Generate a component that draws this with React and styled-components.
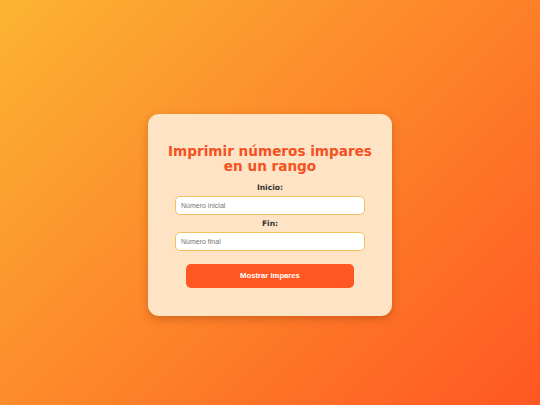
import React from "react";
import styled, { createGlobalStyle } from "styled-components";

const Global = createGlobalStyle`
  html, body { margin: 0; padding: 0; height: 100%; }
  body { font-family: "Liberation Sans", Arial, sans-serif; }
  #root { height: 100%; }
`;

const Page = styled.div`
  width: 540px;
  height: 405px;
  background: linear-gradient(135deg, #fbb432 0%, #ff5722 100%);
  display: flex;
  align-items: center;
  justify-content: center;
`;

const Card = styled.div`
  width: 244px;
  box-sizing: border-box;
  margin-top: 25px;
  padding: 30px 27px 28px;
  background: #ffe3c5;
  border-radius: 11px;
  box-shadow: 0 3px 9px rgba(120, 40, 0, 0.3);
  display: flex;
  flex-direction: column;
  align-items: center;
`;

const Title = styled.h2`
  margin: 0 0 9px;
  font-family: "DejaVu Sans", Verdana, sans-serif;
  font-weight: bold;
  font-size: 13.6px;
  line-height: 15px;
  color: #f4511e;
  text-align: center;
  white-space: nowrap;
`;

const Label = styled.label`
  font-family: "DejaVu Sans", Verdana, sans-serif;
  font-weight: bold;
  font-size: 7.6px;
  line-height: 10px;
  color: #333;
  margin: 0 0 3px;
`;

const Input = styled.input`
  width: 190px;
  height: 19px;
  box-sizing: border-box;
  border: 1px solid #f5c060;
  border-radius: 5px;
  background: #fff;
  padding: 0 5px;
  font-family: "Liberation Sans", Arial, sans-serif;
  font-size: 7px;
  margin: 0 0 4px;
  outline: none;
  &::placeholder { color: #767676; }
`;

const Button = styled.button`
  width: 168px;
  height: 24px;
  margin-top: 8.5px;
  border: none;
  border-radius: 5px;
  background: #ff5722;
  color: #fff;
  font-family: "Liberation Sans", Arial, sans-serif;
  font-weight: bold;
  font-size: 7.7px;
  cursor: pointer;
`;

export default function App() {
  return (
    <Page>
      <Global />
      <Card>
        <Title>
          Imprimir números impares
          <br />
          en un rango
        </Title>
        <Label htmlFor="inicio">Inicio:</Label>
        <Input id="inicio" type="number" placeholder="Número inicial" />
        <Label htmlFor="fin">Fin:</Label>
        <Input id="fin" type="number" placeholder="Número final" />
        <Button>Mostrar impares</Button>
      </Card>
    </Page>
  );
}
